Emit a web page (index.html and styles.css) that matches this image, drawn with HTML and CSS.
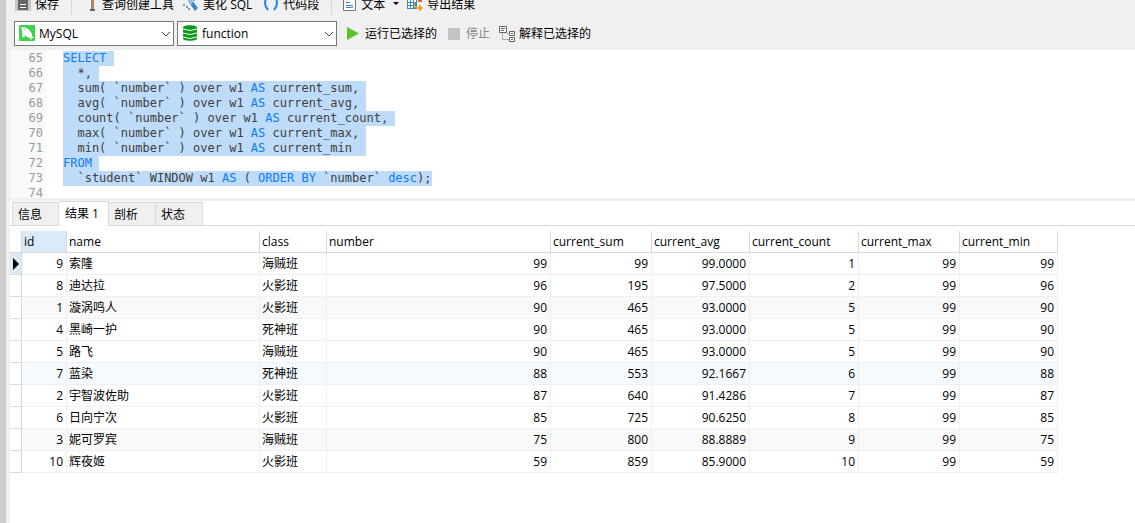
FILE: index.html
```html
<!DOCTYPE html>
<html lang="zh-CN">
<head>
    <meta charset="UTF-8">
    <title>查询 - function</title>
    <link rel="stylesheet" href="styles.css">
</head>
<body>
    <header class="toolbar">
        <button class="herramienta guardar" type="button">
            <svg width="16" height="16" viewBox="0 0 16 16"><rect width="16" height="16" fill="#c6c6c6"/><path d="M3 0h8l2 2v13H3z" fill="#666"/><path d="M5 1h5v4H5z" fill="#ddd"/><path d="M5 9h6v1H5zM5 12h6v1H5z" fill="#fff"/></svg>
            保存
        </button>
        <span class="separador"></span>
        <button class="herramienta consulta" type="button">
            <svg width="16" height="16" viewBox="0 0 16 16"><path d="M7 0h3v14H7z" fill="#b18462"/><path d="M6 14h5v2H6z" fill="#666"/></svg>
            查询创建工具
        </button>
        <button class="herramienta embellecer" type="button">
            <svg width="16" height="16" viewBox="0 0 16 16"><path d="M5 6l3-2 7 9-3 3z" fill="#3b87c8"/><path d="M5 6l3-2 2 3-2 3z" fill="#8fc0e8"/><path d="M0 9h2v2H0zM3 11h2v2H3zM5 13h2v2H5zM10 4h2v2h-2z" fill="#5da3dc"/></svg>
            美化 SQL
        </button>
        <button class="herramienta fragmento" type="button">
            <svg width="16" height="16" viewBox="0 0 16 16"><path d="M5 1Q-1 8 5 15M11 1q6 7 0 14" fill="none" stroke="#2b86ee" stroke-width="2"/></svg>
            代码段
        </button>
        <span class="separador"></span>
        <button class="herramienta texto" type="button">
            <svg width="16" height="16" viewBox="0 0 16 16"><path d="M2.500 .5h12v15h-12z" fill="#fff" stroke="#777"/><path d="M5 4.500h6M5 7.500h4M5 10.500h7M5 12.500h7" stroke="#3b87c8"/></svg>
            文本
            <svg class="flecha" width="6" height="3" viewBox="0 0 6 3"><path d="M0 0h6L3 3z" fill="#000"/></svg>
        </button>
        <button class="herramienta exportar" type="button">
            <svg width="16" height="16" viewBox="0 0 16 16"><path d="M0 1h10v13H0z" fill="#3b87c8"/><path d="M1 5h2v2H1zM4 5h2v2H4zM7 5h2v2H7zM1 8h2v2H1zM4 8h2v2H4zM1 11h2v2H1zM4 11h2v2H4z" fill="#fff"/><path d="M11 1h4v6h-4z" fill="#e8603c"/><path d="M8 7v2q0 3 3 3h1v-3l4 4-4 4v-3h-1q-4 0-4-4V7z" fill="#f7a01d"/></svg>
            导出结果
        </button>
    </header>

    <div class="barra">
        <div class="combo">
            <svg class="icono" width="16" height="16" viewBox="0 0 16 16"><rect width="16" height="16" rx="1" fill="#3fd24c"/><path d="M2 2c4 0 7 1 9 4 2 2 2 3 2 5l2 2-2 0-1 2-1-2c-2-1-4-1-5-3l-1 3-2-2c1-3 0-5-1-9z" fill="#fff"/><path d="M5 4l1 1" stroke="#3fd24c"/></svg>
            <select aria-label="连接"><option>MySQL</option></select>
            <svg class="chevron" width="10" height="6" viewBox="0 0 10 6"><path d="M1 1l4 4 4-4" fill="none" stroke="#444"/></svg>
        </div>
        <div class="combo">
            <svg class="icono" width="16" height="16" viewBox="0 0 16 16"><path d="M1 2.500C1-.5 15-.5 15 2.500v11c0 3-14 3-14 0z" fill="#0c9a1c"/><path d="M1 4q7 3 14 0M1 8q7 3 14 0M1 12q7 3 14 0" fill="none" stroke="#efffef"/></svg>
            <select aria-label="数据库"><option>function</option></select>
            <svg class="chevron" width="10" height="6" viewBox="0 0 10 6"><path d="M1 1l4 4 4-4" fill="none" stroke="#444"/></svg>
        </div>
        <button class="accion" type="button">
            <svg width="12" height="13" viewBox="0 0 12 13"><path d="M0 0l12 6.500L0 13z" fill="#5bc22c"/></svg>
            运行已选择的
        </button>
        <button class="accion" type="button" disabled>
            <svg width="12" height="12" viewBox="0 0 12 12"><path d="M0 0h12v12H0z" fill="#c3c3c3"/></svg>
            停止
        </button>
        <button class="accion explicar" type="button">
            <svg width="16" height="16" viewBox="0 0 16 16"><path d="M.5.5h7v6h-7zM10.500 5.500h5v4h-5zM10.500 11.500h5v4h-5z" fill="#fff" stroke="#666"/><path d="M2 2.500h4M2 4.500h3M12 7.500h2M12 13.500h2" stroke="#666"/><path d="M3.500 7v6.500H10M7.500 7.500H10" fill="none" stroke="#aaa"/></svg>
            解释已选择的
        </button>
    </div>

    <main>
        <div class="editor">
<pre class="lineas">65
66
67
68
69
70
71
72
73
74</pre>
<pre class="codigo"><mark><b>SELECT</b> </mark>
<mark>  *, </mark>
<mark>  sum( `number` ) over w1 <b>AS</b> current_sum, </mark>
<mark>  avg( `number` ) over w1 <b>AS</b> current_avg, </mark>
<mark>  count( `number` ) over w1 <b>AS</b> current_count, </mark>
<mark>  max( `number` ) over w1 <b>AS</b> current_max, </mark>
<mark>  min( `number` ) over w1 <b>AS</b> current_min  </mark>
<mark><b>FROM</b> </mark>
<mark>  `student` WINDOW w1 <b>AS</b> ( <b>ORDER BY</b> `number` <b>desc</b>);</mark>
</pre>
        </div>

        <nav class="pestanas">
            <button type="button">信息</button>
            <button type="button" class="activa">结果 1</button>
            <button type="button">剖析</button>
            <button type="button">状态</button>
        </nav>

        <table class="resultado">
            <colgroup>
                <col class="c-marca"><col class="c-id"><col class="c-name"><col class="c-class"><col class="c-number">
                <col class="c-sum"><col class="c-avg"><col class="c-count"><col class="c-sum"><col class="c-avg">
            </colgroup>
            <thead>
                <tr><th></th><th class="orden">id</th><th>name</th><th>class</th><th>number</th><th>current_sum</th><th>current_avg</th><th>current_count</th><th>current_max</th><th>current_min</th></tr>
            </thead>
            <tbody>
                <tr class="actual"><td><svg width="6" height="12" viewBox="0 0 6 12"><path d="M0 0l6 6-6 6z"/></svg></td><td>9</td><td>索隆</td><td>海贼班</td><td>99</td><td>99</td><td>99.0000</td><td>1</td><td>99</td><td>99</td></tr>
                <tr><td></td><td>8</td><td>迪达拉</td><td>火影班</td><td>96</td><td>195</td><td>97.5000</td><td>2</td><td>99</td><td>96</td></tr>
                <tr><td></td><td>1</td><td>漩涡鸣人</td><td>火影班</td><td>90</td><td>465</td><td>93.0000</td><td>5</td><td>99</td><td>90</td></tr>
                <tr><td></td><td>4</td><td>黑崎一护</td><td>死神班</td><td>90</td><td>465</td><td>93.0000</td><td>5</td><td>99</td><td>90</td></tr>
                <tr><td></td><td>5</td><td>路飞</td><td>海贼班</td><td>90</td><td>465</td><td>93.0000</td><td>5</td><td>99</td><td>90</td></tr>
                <tr class="encima"><td></td><td>7</td><td>蓝染</td><td>死神班</td><td>88</td><td>553</td><td>92.1667</td><td>6</td><td>99</td><td>88</td></tr>
                <tr><td></td><td>2</td><td>宇智波佐助</td><td>火影班</td><td>87</td><td>640</td><td>91.4286</td><td>7</td><td>99</td><td>87</td></tr>
                <tr><td></td><td>6</td><td>日向宁次</td><td>火影班</td><td>85</td><td>725</td><td>90.6250</td><td>8</td><td>99</td><td>85</td></tr>
                <tr><td></td><td>3</td><td>妮可罗宾</td><td>海贼班</td><td>75</td><td>800</td><td>88.8889</td><td>9</td><td>99</td><td>75</td></tr>
                <tr><td></td><td>10</td><td>辉夜姬</td><td>火影班</td><td>59</td><td>859</td><td>85.9000</td><td>10</td><td>99</td><td>59</td></tr>
            </tbody>
        </table>
    </main>
</body>
</html>
```
FILE: styles.css
```css
* {
    margin: 0;
    padding: 0;
    box-sizing: border-box;
}
body {
    display: flex;
    flex-direction: column;
    min-height: 100vh;
    padding-left: 4px;
    border-left: 6px solid #cdcdcd;
    background-color: #f0f0f0;
    color: #000;
    font: 12px/20px "Open Sans", "Noto Sans CJK SC", sans-serif;
}
button, select {
    font: inherit;
    color: inherit;
    border: none;
    background: none;
    white-space: nowrap;
}
svg {
    display: block;
    flex: none;
}

/* barra superior, recortada por arriba */
.toolbar {
    display: flex;
    align-items: flex-end;
    height: 15px;
    padding-left: 5px;
    overflow: hidden;
}
.herramienta {
    display: flex;
    align-items: center;
    gap: 4px;
    height: 20px;
}
.herramienta svg {
    margin-bottom: 4px;
}
.separador {
    width: 1px;
    height: 15px;
    margin: 0 12px;
    background-color: #d5d5d5;
}
.consulta {
    gap: 2px;
}
.embellecer {
    margin-left: 9px;
}
.fragmento {
    margin-left: 11px;
}
.texto {
    margin-left: -3px;
}
.texto .flecha {
    margin-left: 4px;
}
.exportar {
    margin-left: 8px;
}

/* conexion, base de datos y ejecucion */
.barra {
    display: flex;
    align-items: center;
    padding: 6px 4px 4px;
}
.combo {
    position: relative;
    width: 160px;
    margin-right: 3px;
}
.combo select {
    display: block;
    width: 100%;
    height: 25px;
    padding-left: 24px;
    appearance: none;
    border: 1px solid #767676;
    background-color: #fff;
}
.icono {
    position: absolute;
    left: 5px;
    top: 4px;
}
.chevron {
    position: absolute;
    right: 3px;
    top: 10px;
}
.accion {
    display: flex;
    align-items: center;
    gap: 6px;
    margin-left: 7px;
    margin-right: 4px;
}
.accion:disabled {
    color: #838383;
}
.explicar {
    gap: 4px;
    margin-left: 5px;
}

main {
    flex: 1;
    background-color: #fff;
}
.editor {
    display: flex;
    height: 151px;
    border-bottom: 3px solid #f0f0f0;
    overflow: hidden;
}
.editor pre {
    padding-top: 1px;
    font: 12px/15px "DejaVu Sans Mono", monospace;
}
.editor .lineas {
    width: 36px;
    padding-right: 3px;
    text-align: right;
    color: #999;
    background-color: #f9f9f9;
}
.editor .codigo {
    padding-left: 17px;
    color: #404040;
}
.codigo mark {
    display: inline-block;
    color: inherit;
    background-color: #bedbf9;
}
.codigo b {
    font-weight: normal;
    color: #0a7cff;
}

.pestanas {
    display: flex;
    align-items: flex-end;
    height: 25px;
    padding-left: 2px;
    border-bottom: 1px solid #d9d9d9;
}
.pestanas button {
    width: 47px;
    height: 23px;
    padding-top: 2px;
    padding-left: 5px;
    text-align: left;
    border: 1px solid #d9d9d9;
    border-bottom: none;
    border-left: none;
    background-color: #f0f0f0;
}
.pestanas button:first-child {
    border-left: 1px solid #d9d9d9;
}
.pestanas .activa {
    width: 50px;
    height: 25px;
    margin-bottom: -1px;
    padding-bottom: 3px;
    padding-left: 6px;
    background-color: #fff;
}

.resultado {
    width: 1048px;
    margin-top: 5px;
    table-layout: fixed;
    border-collapse: separate;
    border-spacing: 0;
}
.c-marca { width: 12px; }
.c-id { width: 45px; }
.c-name { width: 193px; }
.c-class { width: 67px; }
.c-number { width: 224px; }
.c-sum { width: 101px; }
.c-avg { width: 98px; }
.c-count { width: 109px; }
th, td {
    height: 22px;
    padding: 0 3px 0 2px;
    border-right: 1px solid #f0f0f0;
    border-bottom: 1px solid #f0f0f0;
    text-align: right;
    white-space: nowrap;
}
th {
    font-weight: normal;
    text-align: left;
    border-color: #d9d9d9;
}
td:nth-child(3), td:nth-child(4) {
    text-align: left;
}
.orden {
    background-color: #d9ebf9;
}
tbody tr:nth-child(3n) {
    background-color: #f9f9f9;
}
tbody tr.encima {
    background-color: #f5faff;
}
tbody td:first-child {
    padding-left: 3px;
    padding-right: 2px;
    border-color: #d9d9d9;
    background-color: #fff;
}
tbody .actual td:first-child {
    background-color: #d9ebf9;
}
```
